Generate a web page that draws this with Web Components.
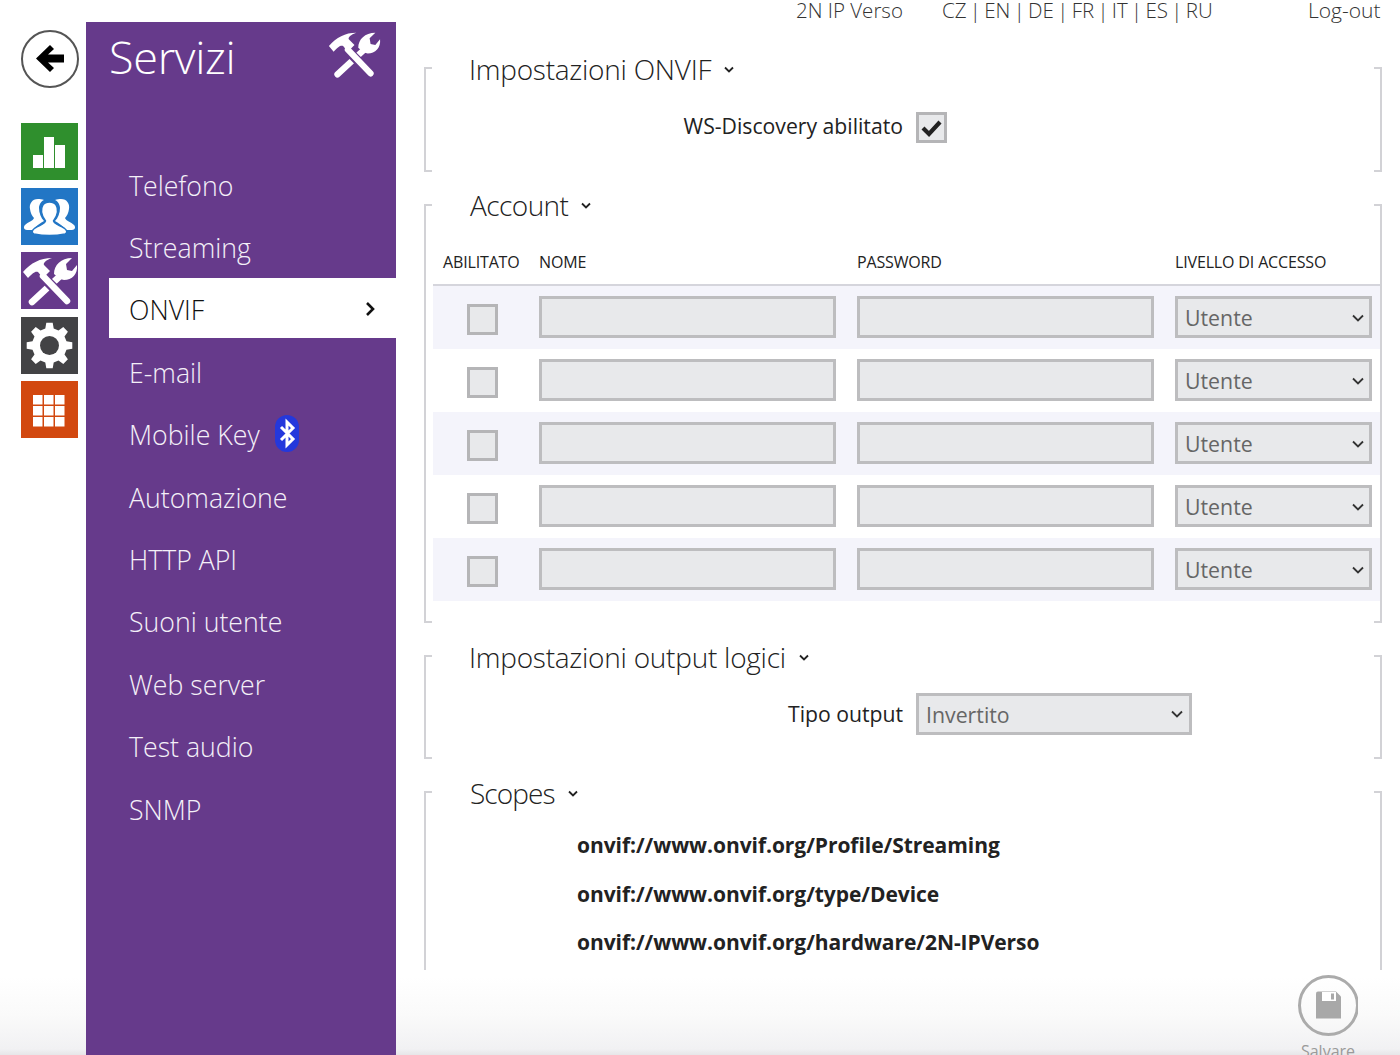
<!DOCTYPE html>
<html lang="it"><head><meta charset="utf-8"><title>ONVIF</title>
<style>html,body{margin:0;padding:0;height:100%;overflow:hidden;background:#fff}</style></head>
<body>
<app-shell>
  <top-bar slot="top"></top-bar>
  <side-rail slot="rail"></side-rail>
  <side-menu slot="menu" heading="Servizi">
    <menu-item>Telefono</menu-item>
    <menu-item>Streaming</menu-item>
    <menu-item active>ONVIF</menu-item>
    <menu-item>E-mail</menu-item>
    <menu-item bt>Mobile Key</menu-item>
    <menu-item>Automazione</menu-item>
    <menu-item>HTTP API</menu-item>
    <menu-item>Suoni utente</menu-item>
    <menu-item>Web server</menu-item>
    <menu-item>Test audio</menu-item>
    <menu-item>SNMP</menu-item>
  </side-menu>
  <div slot="main">
    <form-section heading="Impostazioni ONVIF" style="height:105px">
      <form-row label="WS-Discovery abilitato" style="margin-top:21px;--lp:4px"><tick-box checked></tick-box></form-row>
    </form-section>
    <form-section heading="Account" open-table style="height:419px;--tx:44px;--ls:-.55px">
      <account-table></account-table>
    </form-section>
    <form-section heading="Impostazioni output logici" style="height:104px">
      <form-row label="Tipo output" style="margin-top:15px;--lp:2px"><drop-down style="width:276px">Invertito</drop-down></form-row>
    </form-section>
    <form-section heading="Scopes" no-bottom style="height:179px;--tx:44px;--ls:-.9px">
      <scope-list>
        <div>onvif://www.onvif.org/Profile/Streaming</div>
        <div>onvif://www.onvif.org/type/Device</div>
        <div>onvif://www.onvif.org/hardware/2N-IPVerso</div>
      </scope-list>
    </form-section>
  </div>
  <save-button slot="save"></save-button>
</app-shell>
<script>
const FONT = '"Open Sans","Noto Sans","Liberation Sans",sans-serif';
function def(name, html, init){
  const t=document.createElement('template'); t.innerHTML=html;
  customElements.define(name, class extends HTMLElement{
    constructor(){super(); this.attachShadow({mode:'open'}).appendChild(t.content.cloneNode(true));}
    connectedCallback(){ if(init) init(this, this.shadowRoot); }
  });
}
const TOOLS = `<path fill="#fff" d="M33 22C33 13 40 6 51 6L45 12L46 18L51 19L56 13C57 22 51 28 43 28L39 27Z"/>
<path fill="none" stroke="#fff" stroke-width="6.500" stroke-linecap="round" d="M38 25L11 50"/>
<path fill="none" stroke="#663a8b" stroke-width="10" d="M21 24L45 48"/>
<path fill="none" stroke="#fff" stroke-width="6.500" stroke-linecap="round" d="M22 24L46 49"/>
<path fill="#fff" d="M2 20C10 11 19 6 31 6C25 8 22 11 23 13L29 19L22 26L17 20C14 19 12 21 7 26Z"/>`;
function gear(){
  const cx=28.5,cy=28.5,n=8,R=23,r=17.5; let d='';
  for(let i=0;i<n;i++){
    const a=i*Math.PI*2/n-Math.PI/2, w=Math.PI/n;
    const pts=[[r,a-w*.62],[R,a-w*.36],[R,a+w*.36],[r,a+w*.62]];
    pts.forEach(([q,t],j)=>{d+=((i==0&&j==0)?'M':'L')+(cx+q*Math.cos(t)).toFixed(1)+' '+(cy+q*Math.sin(t)).toFixed(1)+' ';});
  }
  return d+'Z';
}
def('app-shell',`<style>
:host{display:grid;grid-template-columns:86px 310px 1fr;grid-template-rows:22px 1033px;width:1400px;height:1055px;overflow:hidden;position:relative;
background:linear-gradient(to top,#e6e6e8 0,#f1f1f3 6px,#fafafa 40px,#fff 78px);font-family:${FONT};color:#222}
.top{grid-column:1/4}
.main{padding:45px 18px 0 28px;overflow:hidden;min-width:0}
</style>
<div class="top"><slot name="top"></slot></div>
<slot name="rail"></slot><slot name="menu"></slot>
<div class="main"><slot name="main"></slot></div>
<slot name="save"></slot>`);
def('top-bar',`<style>
:host{display:flex;height:22px;font-size:20.500px;font-weight:300;line-height:20px;color:#333;padding-left:796px}
span{white-space:nowrap;display:block}
.a{width:146px}.b{width:367px;word-spacing:-2px}.c{font-size:21px;margin-left:-1px}
</style><span class="a">2N IP Verso</span><span class="b">CZ | EN | DE | FR | IT | ES | RU</span><span class="c">Log-out</span>`);
def('side-rail',`<style>
:host{display:flex;flex-direction:column;align-items:flex-start;padding:8px 0 0 21px}
.back{width:58px;height:58px;box-sizing:border-box;border:2px solid #555;border-radius:50%;margin:0 0 35px 0;display:flex;align-items:center;justify-content:center;background:#fff}
.t{width:57px;height:57px;margin-bottom:7.500px;display:block}
</style>
<div class="back"><svg width="34" height="34" viewBox="0 0 34 34"><path d="M17 3L3 16.500L17 30L21 26L15 20.500H31V12.500H15L21 7Z" fill="#000"/></svg></div>
<svg class="t" viewBox="0 0 57 57"><rect width="57" height="57" fill="#2f8f2d"/><g fill="#fff"><rect x="12" y="32" width="10" height="13"/><rect x="23" y="14" width="10" height="31"/><rect x="34" y="22" width="10" height="23"/></g></svg>
<svg class="t" viewBox="0 0 57 57"><rect width="57" height="57" fill="#2276c5"/><g fill="#fff">
<path d="M17 11C11 11 8 16 9 21C9.500 25 11 28 13 30C12 33 7 34 4 37C2 39 3 42 6 42H13C15 37 20 35 23 33C20 30 18 25 18 20C18 17 20 13 23 12C21 11 19 11 17 11Z"/>
<path d="M40 11C46 11 49 16 48 21C47.500 25 46 28 44 30C45 33 50 34 53 37C55 39 54 42 51 42H44C42 37 37 35 34 33C37 30 39 25 39 20C39 17 37 13 34 12C36 11 38 11 40 11Z"/>
<path d="M28.500 14C22 14 20 19 20.500 24C21 28 23 31 24.500 33C24 36 19 37 14 40C11 42 10 45 13 46C23 48 34 48 44 46C47 45 46 42 43 40C38 37 33 36 32.500 33C34 31 36 28 36.500 24C37 19 35 14 28.500 14Z" stroke="#2276c5" stroke-width="1.500"/></g></svg>
<svg class="t" viewBox="0 0 57 57"><rect width="57" height="57" fill="#663a8b"/>${TOOLS}</svg>
<svg class="t" viewBox="0 0 57 57"><rect width="57" height="57" fill="#434345"/><path fill="#fff" d="${gear()}"/><circle cx="28.500" cy="28.500" r="9.500" fill="#434345"/></svg>
<svg class="t" viewBox="0 0 57 57"><rect width="57" height="57" fill="#d2480f"/><g fill="#fff">${[14,25,36].map(y=>[12,23,34].map(x=>`<rect x="${x}" y="${y}" width="9.500" height="9.500"/>`).join('')).join('')}</g></svg>`);
def('side-menu',`<style>
:host{display:block;background:#663a8b;color:#fff;padding-left:23px}
header{display:flex;justify-content:space-between;align-items:center;height:72px;padding-right:15px}
h1{margin:0 0 2px;font-size:45px;font-weight:300;line-height:68px;letter-spacing:-.3px}
header svg{margin-top:-8px}
nav{display:grid;grid-auto-rows:62.400px;margin-top:59px}
</style>
<header><h1></h1><svg width="54" height="54" viewBox="0 0 57 57">${TOOLS}</svg></header>
<nav><slot></slot></nav>`,(el,s)=>{s.querySelector('h1').textContent=el.getAttribute('heading')});
def('menu-item',`<style>
:host{display:flex;align-items:center;font-size:26.700px;font-weight:300;color:#f4f0f8}
.in{flex:1;height:60px;display:flex;align-items:center;padding:2px 0 0 20px;box-sizing:border-box;gap:14px}
:host([active]) .in{background:#fff;color:#111;margin-top:-1px}
svg.ch,svg.bt{display:none}
:host([active]) svg.ch{display:block;margin-left:auto;margin-right:21px}
:host([bt]) svg.bt{display:block;margin-top:-3px}
</style><div class="in"><span><slot></slot></span>
<svg class="bt" width="26" height="37" viewBox="0 0 26 37"><rect x="1" width="24" height="37" rx="12" fill="#2438dc"/><path d="M7 12L19 24L13 30V7L19 13L7 25" fill="none" stroke="#fff" stroke-width="3"/></svg>
<svg class="ch" width="10" height="16" viewBox="0 0 10 16"><path d="M2 2L8 8L2 14" fill="none" stroke="#111" stroke-width="2.600"/></svg></div>`);
def('form-section',`<style>
:host{display:flow-root;box-sizing:border-box;margin-bottom:32px;border-left:2px solid #d2d2d6;border-right:2px solid #d2d2d6;
--l:linear-gradient(#d2d2d6,#d2d2d6);
background:var(--l) 0 0/6px 2px no-repeat,var(--l) 100% 0/6px 2px no-repeat,var(--l) 0 100%/6px 2px no-repeat,var(--l) 100% 100%/6px 2px no-repeat}
:host([no-bottom]){background:var(--l) 0 0/6px 2px no-repeat,var(--l) 100% 0/6px 2px no-repeat}
.h{margin:-17px 0 0 var(--tx,43px);height:40px;display:flex;align-items:center;gap:12px;font-size:28px;font-weight:300;color:#222;line-height:40px;letter-spacing:var(--ls,-.25px)}
.t{padding-bottom:3px}
:host([open-table]) .h{margin-top:-18px;margin-bottom:18px}
</style><div class="h"><span class="t"></span><svg width="12" height="8" viewBox="0 0 12 8"><path d="M2 1.500L6 5.500L10 1.500" fill="none" stroke="#222" stroke-width="1.800"/></svg></div><slot></slot>`,
(el,s)=>{s.querySelector('.t').textContent=el.getAttribute('heading')});
def('form-row',`<style>
:host{display:grid;grid-template-columns:477px auto;column-gap:13px;align-items:center;justify-content:start}
label{text-align:right;font-size:21.200px;color:#222;white-space:nowrap;padding-bottom:var(--lp,3px)}
</style><label></label><div><slot></slot></div>`,(el,s)=>{s.querySelector('label').textContent=el.getAttribute('label')});
def('tick-box',`<style>
:host{display:block;width:31px;height:31px;box-sizing:border-box;border:3px solid #b5b5b7;background:#e8e9eb}
svg{display:none;width:25px;height:25px}
:host([checked]) svg{display:block}
</style><svg viewBox="0 0 25 25"><path d="M4 13L10 19L21 7" fill="none" stroke="#222" stroke-width="4.200"/></svg>`);
def('text-field',`<style>
:host{display:block;width:297px;height:42px;box-sizing:border-box;border:3px solid #bdbdbf;background:#e8e9eb}
</style>`);
def('drop-down',`<style>
:host{display:flex;align-items:center;height:42px;box-sizing:border-box;border:3px solid #bdbdbf;background:#e8e9eb;padding:0 6px 0 7px;font-size:21.300px;color:#666;justify-content:space-between;font-weight:400}
svg{flex:none}
</style><span><slot></slot></span><svg width="12" height="8" viewBox="0 0 12 8"><path d="M1 1.500L6 6.500L11 1.500" fill="none" stroke="#333" stroke-width="1.800"/></svg>`);
def('account-table',`<style>
:host{display:block;margin-left:7px}
.r{display:grid;grid-template-columns:106px 318px 318px 1fr;align-items:center}
.hd{height:40px;border-bottom:2px solid #d5d5dc;font-size:16px;color:#222;letter-spacing:-.15px}
.hd div{padding-bottom:5px}
.hd div:first-child{padding-left:10px}
.b{height:63px}
.b:nth-child(odd){background:#f4f4fb}
tick-box{margin:4px 0 0 34px}
text-field{margin-top:-2px}
drop-down{width:197px;margin-top:-2px;padding:2px 5px 0 7px}
</style>
<div class="r hd"><div>ABILITATO</div><div>NOME</div><div>PASSWORD</div><div>LIVELLO DI ACCESSO</div></div>
${[1,2,3,4,5].map(()=>`<div class="r b"><tick-box></tick-box><text-field></text-field><text-field></text-field><drop-down>Utente</drop-down></div>`).join('')}`);
def('scope-list',`<style>
:host{display:grid;grid-auto-rows:48.500px;margin:7px 0 0 151px;font-size:21px;font-weight:700;color:#222;align-items:center;letter-spacing:-.05px;white-space:nowrap}
</style><slot></slot>`);
def('save-button',`<style>
:host{position:absolute;left:1298px;top:975px;width:60px;display:flex;flex-direction:column;align-items:center;font-size:16px;color:#9a9a9a;font-weight:400;height:80px;overflow:hidden}
svg{display:block;margin-bottom:4px;flex:none}
</style><svg width="61" height="61" viewBox="0 0 61 61"><circle cx="30.500" cy="30.500" r="29" fill="none" stroke="#ababab" stroke-width="3"/>
<path d="M20 17H38L43 22V44H18V19Q18 17 20 17Z" fill="#a8a8a8" transform="translate(0,-.5)"/><rect x="24" y="17" width="14" height="9" fill="#fff"/><rect x="33" y="18.500" width="3" height="6" fill="#a8a8a8"/></svg><span>Salvare</span>`);
</script>
</body></html>
